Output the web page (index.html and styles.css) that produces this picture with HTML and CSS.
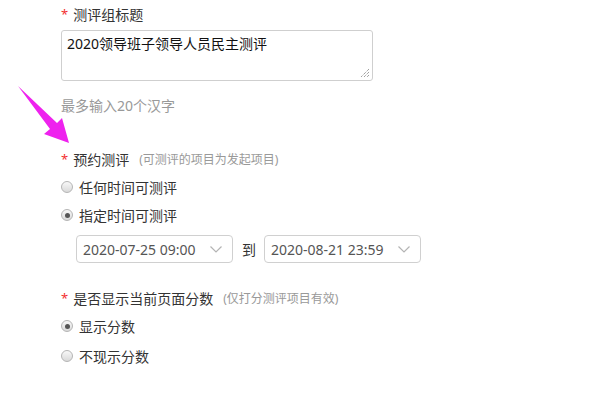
FILE: index.html
```html
<!DOCTYPE html>
<html lang="zh-CN">
<head>
<meta charset="utf-8">
<link rel="stylesheet" href="styles.css">
</head>
<body>
<div class="form">
  <div class="label"><span class="star">*</span>测评组标题</div>
  <div class="textarea">2020领导班子领导人员民主测评
    <svg class="grip" width="10" height="10" viewBox="0 0 10 10"><path d="M9 1 L1 9 M9 4 L4 9 M9 7 L7 9" stroke="#777" stroke-width="1" stroke-dasharray="1 1"/></svg>
  </div>
  <div class="hint">最多输入20个汉字</div>

  <div class="label label2"><span class="star">*</span>预约测评<span class="note">(可测评的项目为发起项目)</span></div>
  <div class="radio-row r1"><span class="radio"></span>任何时间可测评</div>
  <div class="radio-row"><span class="radio checked"></span>指定时间可测评</div>
  <div class="range">
    <div class="select"><span>2020-07-25 09:00</span><svg class="chev" width="12" height="7" viewBox="0 0 12 7"><path d="M0.5 0.5 L6 6 L11.5 0.5" fill="none" stroke="#b4b4b4" stroke-width="1.2"/></svg></div>
    <span class="to">到</span>
    <div class="select"><span>2020-08-21 23:59</span><svg class="chev" width="12" height="7" viewBox="0 0 12 7"><path d="M0.5 0.5 L6 6 L11.5 0.5" fill="none" stroke="#b4b4b4" stroke-width="1.2"/></svg></div>
  </div>

  <div class="label label3"><span class="star">*</span>是否显示当前页面分数<span class="note">(仅打分测评项目有效)</span></div>
  <div class="radio-row r3"><span class="radio checked"></span>显示分数</div>
  <div class="radio-row r4"><span class="radio"></span>不现示分数</div>
</div>
<svg class="arrow" width="80" height="80" viewBox="0 0 80 80">
  <polygon points="18,86 57,123 62,118 69,143 44,134 50,129" transform="translate(0,-70)" fill="#ee22ee"/>
</svg>
</body>
</html>
```

FILE: styles.css
```css
html, body {
  margin: 0;
  padding: 0;
  background: #fff;
}
body {
  font-family: "Noto Sans", "Noto Sans CJK SC", sans-serif;
  font-size: 14px;
  color: #333;
  position: relative;
  width: 600px;
  height: 400px;
  overflow: hidden;
}
.form {
  padding: 7px 0 0 61px;
  display: flex;
  flex-direction: column;
  align-items: flex-start;
}
.label {
  height: 16px;
  line-height: 16px;
  display: flex;
  align-items: center;
  color: #333;
}
.star {
  color: #f23030;
  font-size: 13px;
  margin-right: 5px;
  position: relative;
  top: -1px;
}
.note {
  font-size: 12px;
  color: #999;
  margin-left: 10px;
}
.textarea {
  margin-top: 7px;
  width: 312px;
  height: 51px;
  box-sizing: border-box;
  border: 1px solid #cfcfcf;
  border-radius: 3px;
  padding: 3px 5px;
  line-height: 20px;
  font-size: 14px;
  color: #111;
  position: relative;
}
.grip {
  position: absolute;
  right: 2px;
  bottom: 2px;
}
.hint {
  margin-top: 15px;
  line-height: 20px;
  color: #999;
}
.label2 {
  margin-top: 34px;
  height: 20px;
  line-height: 20px;
}
.radio-row {
  height: 28px;
  display: flex;
  align-items: center;
  color: #333;
}
.r1 { margin-top: 3px; }
.radio {
  width: 12px;
  height: 12px;
  box-sizing: border-box;
  border: 1px solid #b5b5b5;
  border-radius: 50%;
  background: linear-gradient(#f8f8f8, #d9d9d9);
  margin-right: 6px;
  position: relative;
}
.radio.checked::after {
  content: "";
  position: absolute;
  left: 2.5px;
  top: 2.5px;
  width: 5px;
  height: 5px;
  border-radius: 50%;
  background: #555;
}
.range {
  margin-top: 6px;
  margin-left: 15px;
  display: flex;
  align-items: center;
}
.select {
  width: 157px;
  height: 28px;
  box-sizing: border-box;
  border: 1px solid #d0d0d0;
  border-radius: 4px;
  display: flex;
  align-items: center;
  justify-content: space-between;
  padding: 0 10px 0 6px;
  color: #555;
  font-size: 14px;
}
.chev { display: block; }
.to {
  margin: 0 8px 0 9px;
  color: #333;
}
.label3 {
  margin-top: 26px;
  height: 20px;
  line-height: 20px;
}
.r3 { margin-top: 3px; }
.r4 { margin-top: 2px; }
.arrow {
  position: absolute;
  left: 0;
  top: 70px;
}
```
